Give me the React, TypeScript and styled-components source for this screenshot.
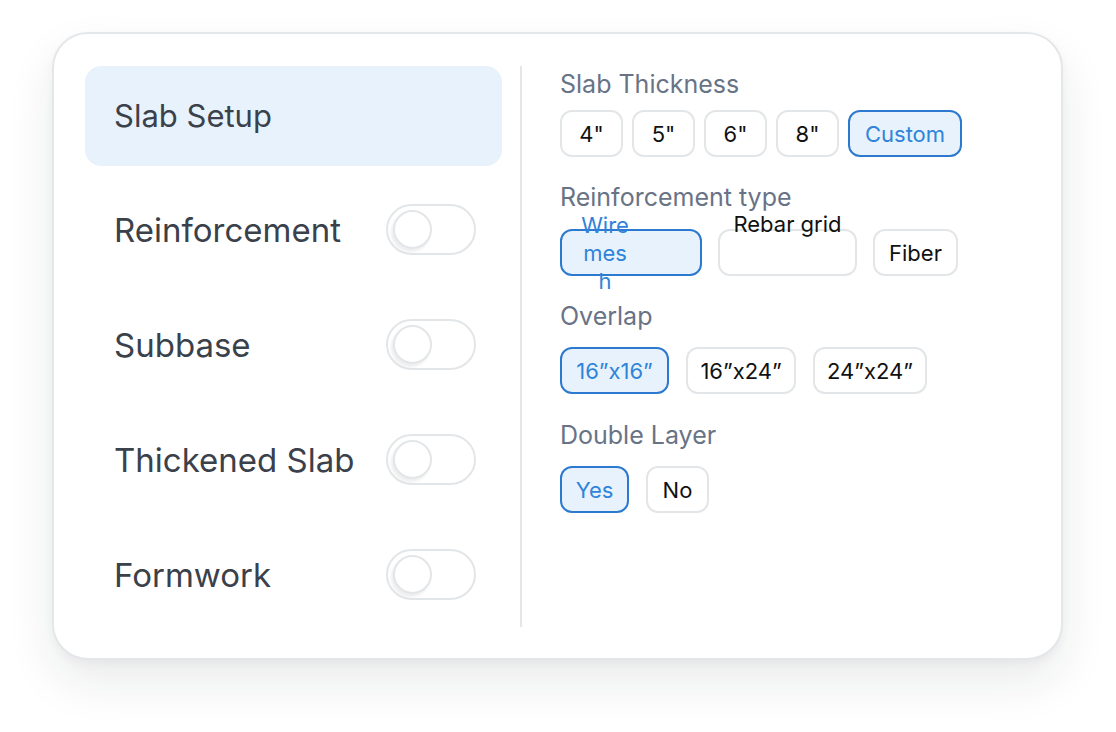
import React from "react";
import styled, { createGlobalStyle } from "styled-components";

const Global = createGlobalStyle`
  html, body { margin: 0; padding: 0; background: #ffffff; }
  body { font-family: Inter, "Noto Sans", "Liberation Sans", sans-serif; }
  * { box-sizing: border-box; }
`;

const Page = styled.div`
  width: 1116px;
  height: 732px;
  padding: 32px 0 0 52px;
`;

const Card = styled.div`
  width: 1011px;
  height: 628px;
  background: #ffffff;
  border: 2px solid #e4e7e9;
  border-radius: 36px;
  box-shadow: 0 22px 48px rgba(20, 30, 40, 0.09), 0 4px 10px rgba(20, 30, 40, 0.04);
  padding: 32px 31px 31px 31px;
  display: flex;
`;

const Sidebar = styled.div`
  width: 417px;
  display: flex;
  flex-direction: column;
  gap: 15px;
`;

const NavRow = styled.div<{ $active?: boolean }>`
  height: 100px;
  border-radius: 16px;
  background: ${(p) => (p.$active ? "#e8f2fc" : "transparent")};
  padding: 0 26px 0 29px;
  display: flex;
  align-items: center;
  justify-content: space-between;
`;

const NavLabel = styled.span<{ $size: number }>`
  font-size: ${(p) => p.$size}px;
  color: #3a414b;
  margin-top: -2px;
`;

const Toggle = styled.div`
  width: 90px;
  height: 51px;
  border: 2px solid #e3e6e8;
  border-radius: 26px;
  background: #ffffff;
  display: flex;
  align-items: center;
  padding-left: 5px;
  margin-top: -3px;
`;

const Knob = styled.div`
  width: 39px;
  height: 39px;
  border-radius: 50%;
  border: 2px solid #e3e6e8;
  background: #ffffff;
  box-shadow: -2px 3px 3px rgba(0, 0, 0, 0.07);
`;

const Divider = styled.div`
  width: 2px;
  background: #e4e7ea;
  margin: 0 38px 0 18px;
`;

const Content = styled.div`
  flex: 1;
  display: flex;
  flex-direction: column;
  padding-top: 4px;
`;

const Section = styled.div<{ $gap: number; $bottom: number }>`
  display: flex;
  flex-direction: column;
  gap: ${(p) => p.$gap}px;
  margin-bottom: ${(p) => p.$bottom}px;
`;

const Label = styled.div`
  font-size: 25px;
  line-height: 28px;
  color: #687386;
`;

const Options = styled.div<{ $gap: number }>`
  display: flex;
  gap: ${(p) => p.$gap}px;
`;

const Option = styled.div<{ $active?: boolean; $w: number; $align?: string; $justify?: string }>`
  height: 47px;
  width: ${(p) => p.$w}px;
  flex: none;
  padding: 0 18px;
  border-radius: 12px;
  border: 2px solid ${(p) => (p.$active ? "#2c7ad0" : "#e3e6e8")};
  background: ${(p) => (p.$active ? "#e8f2fc" : "#ffffff")};
  color: ${(p) => (p.$active ? "#2f84da" : "#111111")};
  font-size: 22px;
  line-height: 28px;
  display: flex;
  align-items: ${(p) => p.$align || "center"};
  justify-content: ${(p) => p.$justify || "center"};
  white-space: nowrap;
`;

const WrapText = styled.span`
  width: 50px;
  flex: none;
  text-align: center;
  white-space: normal;
  word-break: break-all;
`;

const LiftedText = styled.span`
  margin-top: -21px;
`;

const navItems = ["Reinforcement", "Subbase", "Thickened Slab", "Formwork"];

export default function App() {
  return (
    <>
      <Global />
      <Page>
        <Card>
          <Sidebar>
            <NavRow $active>
              <NavLabel $size={31}>Slab Setup</NavLabel>
            </NavRow>
            {navItems.map((n) => (
              <NavRow key={n}>
                <NavLabel $size={33}>{n}</NavLabel>
                <Toggle>
                  <Knob />
                </Toggle>
              </NavRow>
            ))}
          </Sidebar>
          <Divider />
          <Content>
            <Section $gap={12} $bottom={26}>
              <Label>Slab Thickness</Label>
              <Options $gap={9}>
                <Option $w={63}>4"</Option>
                <Option $w={63}>5"</Option>
                <Option $w={63}>6"</Option>
                <Option $w={63}>8"</Option>
                <Option $w={114} $active>Custom</Option>
              </Options>
            </Section>
            <Section $gap={18} $bottom={26}>
              <Label>Reinforcement type</Label>
              <Options $gap={16}>
                <Option $active $w={142} $justify="flex-start">
                  <WrapText>Wire mesh</WrapText>
                </Option>
                <Option $w={139} $align="flex-start">
                  <LiftedText>Rebar grid</LiftedText>
                </Option>
                <Option $w={85}>Fiber</Option>
              </Options>
            </Section>
            <Section $gap={17} $bottom={27}>
              <Label>Overlap</Label>
              <Options $gap={17}>
                <Option $w={109} $active>16”x16”</Option>
                <Option $w={110}>16”x24”</Option>
                <Option $w={114}>24”x24”</Option>
              </Options>
            </Section>
            <Section $gap={17} $bottom={0}>
              <Label>Double Layer</Label>
              <Options $gap={17}>
                <Option $w={69} $active>Yes</Option>
                <Option $w={63}>No</Option>
              </Options>
            </Section>
          </Content>
        </Card>
      </Page>
    </>
  );
}
